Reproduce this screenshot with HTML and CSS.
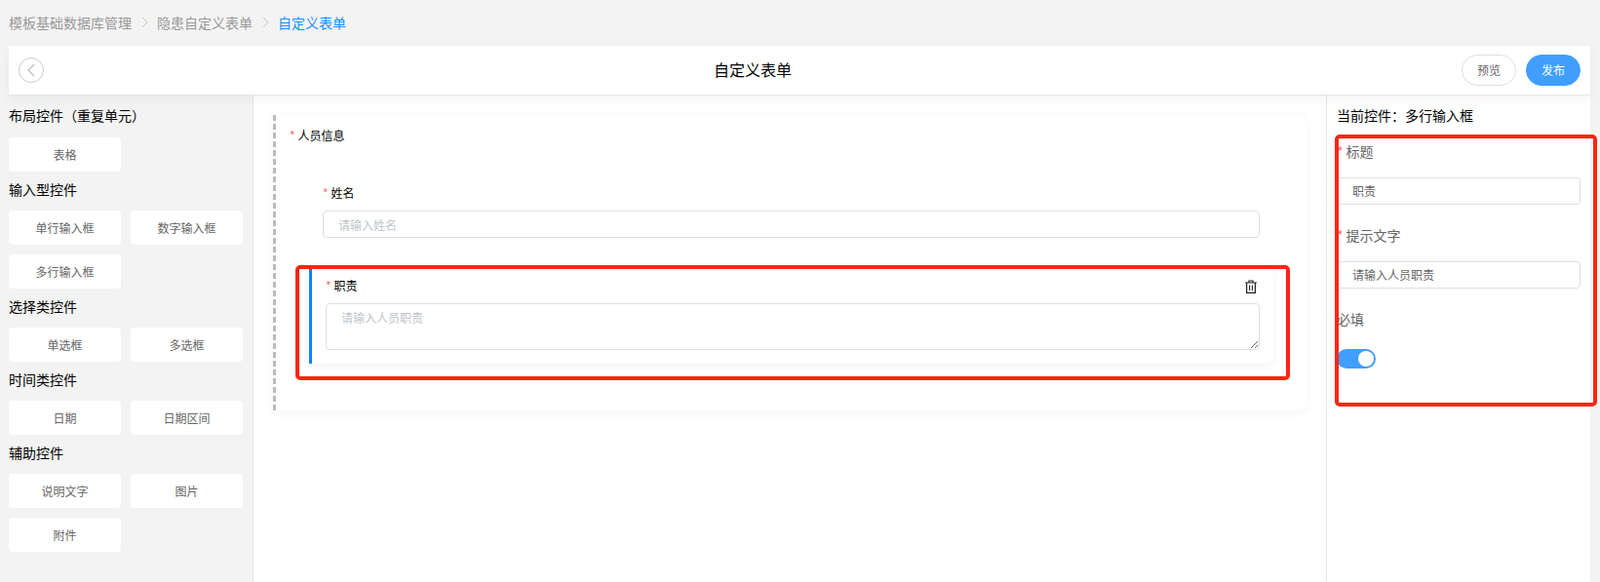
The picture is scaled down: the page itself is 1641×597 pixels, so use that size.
FILE: index.html
```html
<!DOCTYPE html>
<html lang="en">
<head>
  <meta charset="UTF-8">
  <meta name="viewport" content="width=device-width, initial-scale=1.0">
  <title>自定义表单</title>
  <link rel="stylesheet" href="styles.css">
</head>
<body>

<div class="page">
  <!-- breadcrumb -->
  <div class="crumbs">
    <span>模板基础数据库管理</span>
    <svg class="crumb-sep" width="7" height="12" viewBox="0 0 7 12"><path d="M1 1l5 5-5 5" fill="none" stroke="#c0c4cc" stroke-width="1"/></svg>
    <span>隐患自定义表单</span>
    <svg class="crumb-sep" width="7" height="12" viewBox="0 0 7 12"><path d="M1 1l5 5-5 5" fill="none" stroke="#c0c4cc" stroke-width="1"/></svg>
    <span class="crumb-active">自定义表单</span>
  </div>

  <div class="topbar">
    <div class="back">
      <svg width="8" height="14" viewBox="0 0 8 14"><path d="M7 1L1 7l6 6" fill="none" stroke="#bbb" stroke-width="1.2"/></svg>
    </div>
    <div class="topbar-title">自定义表单</div>
    <div class="topbar-btns">
      <button type="button" class="btn">预览</button>
      <button type="button" class="btn btn-primary">发布</button>
    </div>
  </div>

  <div class="workspace">
    <div class="sidebar">
      <div class="group-title first">布局控件（重复单元）</div>
      <div class="tools">
        <div class="tool">表格</div>
      </div>
      <div class="group-title">输入型控件</div>
      <div class="tools">
        <div class="tool">单行输入框</div>
        <div class="tool">数字输入框</div>
        <div class="tool">多行输入框</div>
      </div>
      <div class="group-title">选择类控件</div>
      <div class="tools">
        <div class="tool">单选框</div>
        <div class="tool">多选框</div>
      </div>
      <div class="group-title">时间类控件</div>
      <div class="tools">
        <div class="tool">日期</div>
        <div class="tool">日期区间</div>
      </div>
      <div class="group-title">辅助控件</div>
      <div class="tools">
        <div class="tool">说明文字</div>
        <div class="tool">图片</div>
        <div class="tool">附件</div>
      </div>
    </div>

    <div class="main">
      <div class="canvas">
        <div class="canvas-label"><span class="star">*</span>人员信息</div>

        <div class="item">
          <div class="item-head">
            <div class="item-label"><span class="star">*</span>姓名</div>
          </div>
          <input class="field" type="text" placeholder="请输入姓名">
        </div>

        <div class="item item-active">
          <div class="item-head">
            <div class="item-label"><span class="star">*</span>职责</div>
            <svg class="trash" width="12" height="14" viewBox="0 0 12 14">
              <path d="M0 3h12M4 3V1h4v2" fill="none" stroke="#222" stroke-width="1.2"/>
              <path d="M1.6 3v10.4h8.8V3" fill="none" stroke="#222" stroke-width="1.2"/>
              <path d="M4.6 5.5v5.5M7.4 5.5v5.5" fill="none" stroke="#222" stroke-width="1.1"/>
            </svg>
          </div>
          <textarea class="field field-area" placeholder="请输入人员职责"></textarea>
        </div>
      </div>
    </div>

    <div class="props">
      <div class="props-title">当前控件：多行输入框</div>

      <div class="prop-label"><span class="star">*</span>标题</div>
      <input class="field prop-input" type="text" value="职责">

      <div class="prop-label"><span class="star">*</span>提示文字</div>
      <input class="field prop-input" type="text" value="请输入人员职责">

      <div class="prop-label">必填</div>
      <div class="switch"><span class="switch-knob"></span></div>
    </div>
  </div>

  <!-- red annotation boxes drawn over the screenshot -->
  <div class="mark mark-item"></div>
  <div class="mark mark-props"></div>
</div>

</body>
</html>
```

FILE: styles.css
```css
html, body {
  margin: 0;
  height: 597px;
  overflow: hidden;
}
body {
  font-family: "Noto Sans CJK SC", "Liberation Sans", sans-serif;
  background-color: #f3f3f3;
  color: #000;
}
.page {
  position: relative;
  height: 597px;
  padding: 0 10px 0 9px;
  box-sizing: border-box;
  display: flex;
  flex-direction: column;
}

/* breadcrumb */
.crumbs {
  height: 47px;
  padding-bottom: 1px;
  box-sizing: border-box;
  display: flex;
  align-items: center;
  font-size: 14px;
  color: #999;
}
.crumb-sep {
  margin: 0 9.5px;
}
.crumb-active {
  color: #1890ff;
}

/* top bar */
.topbar {
  position: relative;
  z-index: 1;
  height: 50px;
  padding: 0 10px;
  display: flex;
  align-items: center;
  justify-content: space-between;
  background-color: #fff;
  border-bottom: 1px solid #e6e6e6;
  box-shadow: 0 4px 10px rgba(0, 0, 0, 0.05);
}
.back {
  width: 26px;
  height: 26px;
  box-sizing: border-box;
  border: 1px solid #ccc;
  border-radius: 50%;
  display: flex;
  align-items: center;
  justify-content: center;
}
.topbar-title {
  font-size: 16px;
  line-height: 22px;
  margin-top: -2px;
}
.topbar-btns {
  display: flex;
  gap: 10px;
}
.btn {
  width: 56px;
  height: 32px;
  padding: 0 0 2px;
  font-family: inherit;
  font-size: 12px;
  color: #666;
  background-color: #fff;
  border: 1px solid #dcdfe6;
  border-radius: 16px;
}
.btn-primary {
  color: #fff;
  background-color: #409eff;
  border-color: #409eff;
}

.workspace {
  flex: 1;
  display: flex;
  min-height: 0;
}

/* left tools */
.sidebar {
  width: 251px;
  box-sizing: border-box;
  border-right: 1px solid #e6e6e6;
}
.group-title {
  height: 20px;
  line-height: 16px;
  margin-bottom: 10px;
  font-size: 14px;
}
.group-title.first {
  margin-top: 12px;
  margin-bottom: 11px;
}
.tools {
  display: grid;
  grid-template-columns: 115px 115px;
  column-gap: 10px;
}
.tool {
  height: 35px;
  line-height: 35px;
  margin-bottom: 10px;
  text-align: center;
  font-size: 12px;
  color: #666;
  background-color: #fff;
  border-radius: 4px;
}

/* canvas */
.main {
  flex: 1;
  padding: 20px;
  background-color: #fff;
}
.canvas {
  padding: 10px 34px 48px 14px;
  font-size: 12px;
  background-color: #fff;
  border-left: 3px dashed #bbb;
  border-radius: 0 8px 8px 0;
  box-shadow: 0 2px 12px rgba(0, 0, 0, 0.05);
}
.canvas-label {
  height: 20px;
  line-height: 22px;
  margin-bottom: 32px;
}
.star {
  margin-right: 3px;
  color: #f56c6c;
}
.item {
  margin-left: 20px;
  margin-bottom: 17px;
  padding: 7px 14px 14px;
}
.item:last-child {
  margin-bottom: 0;
}
.item-active {
  padding-left: 14px;
  border-left: 3px solid #0a84ff;
  border-radius: 0 8px 8px 0;
  box-shadow: 0 2px 10px rgba(0, 0, 0, 0.06);
}
.item-head {
  height: 20px;
  margin-bottom: 9px;
  display: flex;
  align-items: center;
  justify-content: space-between;
}
.item-label {
  line-height: 20px;
  margin-top: 2px;
}
.trash {
  margin-top: 4px;
  margin-right: 3px;
}
.field {
  display: block;
  width: 100%;
  height: 28px;
  box-sizing: border-box;
  padding: 0 15px;
  font-family: inherit;
  font-size: 12px;
  color: #666;
  background-color: #fff;
  border: 1px solid #dcdfe6;
  border-radius: 4px;
  outline: none;
}
.field::placeholder {
  color: #c0c4cc;
}
.field-area {
  height: 48px;
  padding: 5px 15px;
  resize: vertical;
}

/* right properties */
.props {
  width: 271px;
  box-sizing: border-box;
  padding: 12px 10px 0 10px;
  background-color: #fff;
  border-left: 1px solid #e6e6e6;
}
.props-title {
  height: 20px;
  line-height: 16px;
  margin-bottom: 17px;
  font-size: 14px;
}
.prop-label {
  height: 20px;
  line-height: 17px;
  margin-bottom: 15px;
  font-size: 14px;
  color: #666;
}
.prop-input {
  padding-bottom: 2px;
  margin-bottom: 23px;
}
.switch {
  width: 40px;
  height: 20px;
  margin-top: 19px;
  display: flex;
  justify-content: flex-end;
  align-items: center;
  padding: 0 2px;
  box-sizing: border-box;
  background-color: #409eff;
  border-radius: 10px;
}
.switch-knob {
  width: 16px;
  height: 16px;
  background-color: #fff;
  border-radius: 50%;
}

/* annotation boxes */
.mark {
  position: absolute;
  z-index: 2;
  box-sizing: border-box;
  border: 4px solid #ff2414;
  border-radius: 5px;
  pointer-events: none;
}
.mark-item {
  left: 303px;
  top: 272px;
  width: 1020px;
  height: 118px;
}
.mark-props {
  left: 1369px;
  top: 138px;
  width: 269px;
  height: 279px;
}
```
